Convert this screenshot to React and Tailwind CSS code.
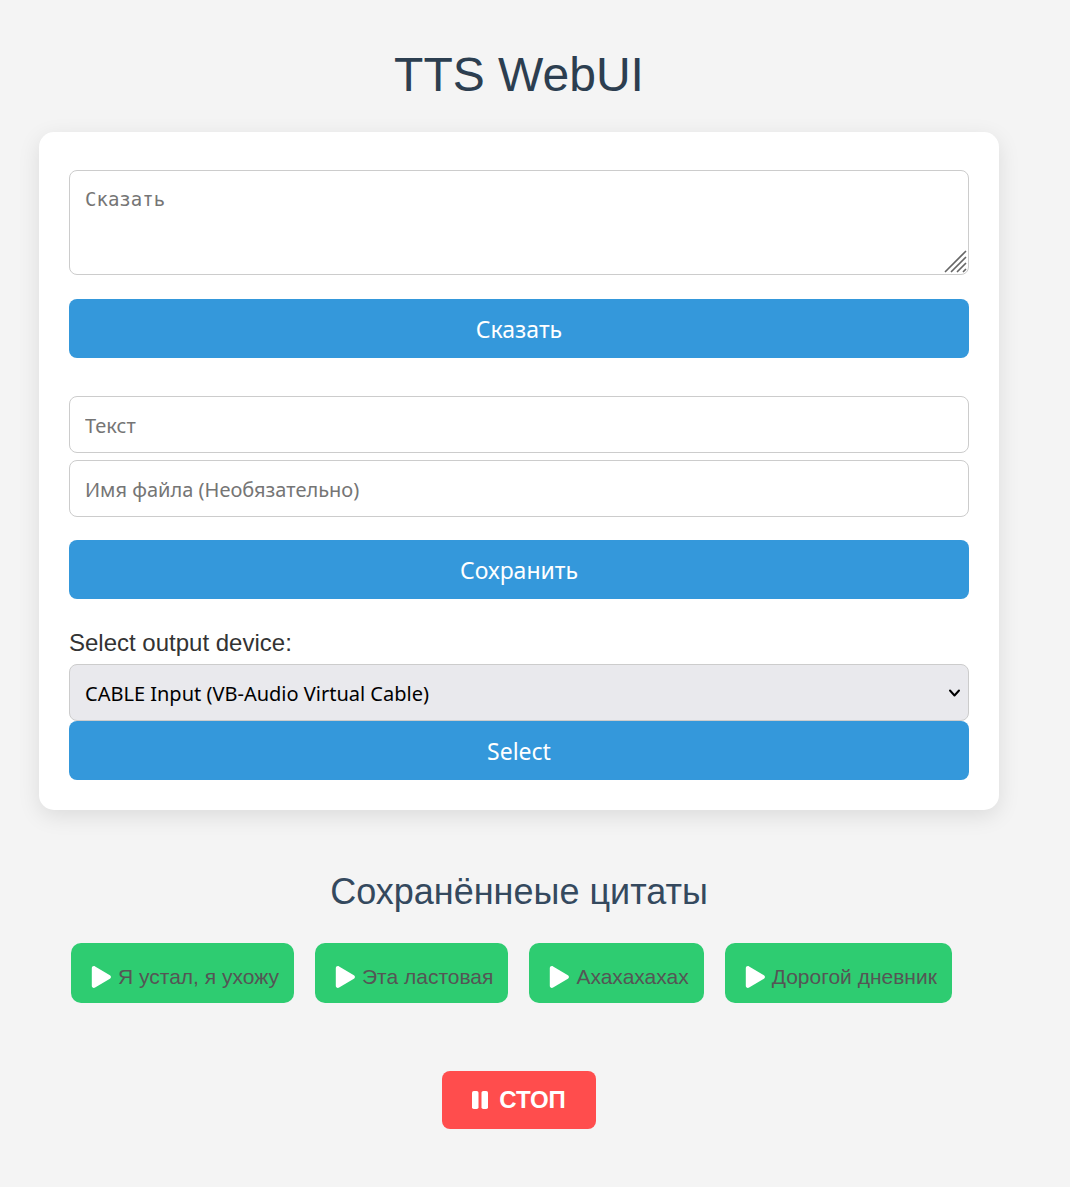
const quotes = ["Я устал, я ухожу", "Эта ластовая", "Ахахахахах", "Дорогой дневник"];

const primary =
  "block h-[59px] w-full rounded-lg bg-[#3498db] pt-0.5 font-['Noto_Sans',sans-serif] text-[23px] text-white";
const field =
  "block h-[57px] w-full rounded-lg border border-[#cccccc] bg-white px-[15px] pt-0.5 font-['Noto_Sans',sans-serif] text-[20px] placeholder:text-[#757575]";

function GripIcon() {
  return (
    <svg className="pointer-events-none absolute right-0.5 bottom-0.5 size-[24px]" viewBox="0 0 24 24" fill="none" stroke="#666" strokeWidth="1.7" strokeLinecap="round" aria-hidden="true">
      <path d="M2.500 22.500 22.500 2.500M8.500 22.500 22.500 8.500M14.500 22.500 22.500 14.500M20.500 22.500 22.500 20.500" />
    </svg>
  );
}

function PlayIcon() {
  return (
    <svg className="mr-[6px] h-[24px] w-[21px]" viewBox="0 0 21 24" fill="#fff" aria-hidden="true">
      <path d="M.8 3.200C.8 1.400 2.600.5 4.100 1.400L18.900 10.200C20.300 11.100 20.300 12.900 18.900 13.800L4.100 22.600C2.600 23.500.8 22.600.8 20.800Z" />
    </svg>
  );
}

function PauseIcon() {
  return (
    <svg className="mr-[11px] h-[18px] w-[16px]" viewBox="0 0 16 18" fill="#fff" aria-hidden="true">
      <rect width="6.500" height="18" rx="1.800" />
      <rect x="9.500" width="6.500" height="18" rx="1.800" />
    </svg>
  );
}

export default function App() {
  return (
    <div className="min-h-screen bg-[#f4f4f4] pt-[45px] pr-[71px] pb-[58px] pl-[39px] font-['Liberation_Sans',Arial,sans-serif] text-[#333]">
      <h1 className="text-center text-[48px] leading-[60px] text-[#2c3e50]">TTS WebUI</h1>
      <main className="mt-[27px] rounded-[15px] bg-white px-[30px] pt-[38px] pb-[30px] shadow-[0_6px_22px_rgba(0,0,0,0.1)]">
        <form onSubmit={(e) => e.preventDefault()}>
          <div className="relative">
            <textarea aria-label="Сказать" placeholder="Сказать" className="block h-[105px] w-full resize-none rounded-lg border border-[#cccccc] bg-white px-[15px] py-[14px] font-['DejaVu_Sans_Mono',monospace] text-[19px] leading-7 placeholder:text-[#757575]" />
            <GripIcon />
          </div>
          <button className={primary + " mt-6"}>Сказать</button>
        </form>
        <form className="mt-[38px]" onSubmit={(e) => e.preventDefault()}>
          <input aria-label="Текст" placeholder="Текст" className={field} />
          <input aria-label="Имя файла" placeholder="Имя файла (Необязательно)" className={field + " mt-[7px]"} />
          <button className={primary + " mt-[23px]"}>Сохранить</button>
        </form>
        <form className="mt-[29px]" onSubmit={(e) => e.preventDefault()}>
          <label htmlFor="device" className="block text-[24px] leading-[30px]">Select output device:</label>
          <div className="relative mt-[6px]">
            <select id="device" className="block h-[57px] w-full appearance-none rounded-lg border border-[#cccccc] bg-[#e9e9ed] px-[15px] pt-0.5 font-['Noto_Sans',sans-serif] text-[20px] text-black">
              <option>CABLE Input (VB-Audio Virtual Cable)</option>
            </select>
            <svg className="pointer-events-none absolute top-[24px] right-[8px] h-[10px] w-[13px]" viewBox="0 0 13 10" fill="none" stroke="#000" strokeWidth="2" strokeLinecap="round" strokeLinejoin="round" aria-hidden="true">
              <path d="M2 2.500 6.500 7.500 11 2.500" />
            </svg>
          </div>
          <button className={primary}>Select</button>
        </form>
      </main>
      <section>
        <h2 className="mt-[60px] text-center text-[36px] leading-[44px] text-[#34495e]">Сохранённеые цитаты</h2>
        <div className="mt-[29px] ml-8 flex flex-wrap gap-[21px]">
          {quotes.map((q) => (
            <button key={q} className="flex h-[60px] items-center rounded-[10px] bg-[#2ecc71] pt-2 pr-[15px] pl-5 text-[21px] text-[#555]">
              <PlayIcon />
              {q}
            </button>
          ))}
        </div>
      </section>
      <button className="mx-auto mt-[68px] flex h-[58px] items-center rounded-lg bg-[#ff4d4d] px-[30px] text-[24px] font-bold text-white">
        <PauseIcon />
        СТОП
      </button>
    </div>
  );
}
